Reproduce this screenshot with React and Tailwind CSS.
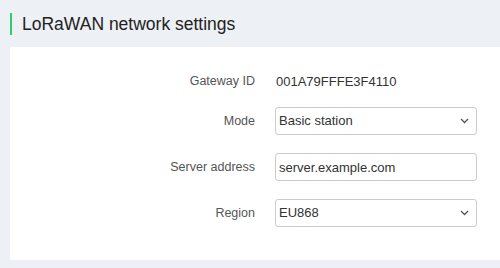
import { useState } from 'react';

const font = { fontFamily: '"Liberation Sans", Arial, sans-serif' };

function Chevron() {
  return (
    <svg width="9" height="6" viewBox="0 0 9 6" className="pointer-events-none absolute right-[8px] top-1/2 -translate-y-1/2">
      <path d="M1 1l3.5 3.5L8 1" fill="none" stroke="#555" strokeWidth="1.3" />
    </svg>
  );
}

// ── form row ──────────────────────────────────────────────────────────────
function Row({ label, children, className = '' }) {
  return (
    <div className={`flex items-center gap-[20px] ${className}`}>
      <div className="w-[245px] shrink-0 text-right text-[12.5px] text-[#555]">{label}</div>
      <div className="w-[202px] shrink-0">{children}</div>
    </div>
  );
}

function Select({ value, options, onChange }) {
  return (
    <div className="relative">
      <select value={value} onChange={e => onChange(e.target.value)}
        className="h-[28px] w-full appearance-none rounded-[3px] border border-[#ccc] bg-white pl-[3px] pr-6 text-[13px] text-[#333] outline-none"
        style={font}>
        {options.map(o => <option key={o}>{o}</option>)}
      </select>
      <Chevron />
    </div>
  );
}

export default function App() {
  const [mode, setMode] = useState('Basic station');
  const [server, setServer] = useState('server.example.com');
  const [region, setRegion] = useState('EU868');

  return (
    <div className="h-[268px] w-[500px] overflow-hidden bg-[#edf0f4]" style={font}>
      <div className="flex h-[47px] items-start pl-[10px] pt-[13px]">
        <div className="h-[22px] w-[2px] bg-[#2ecc71]" />
        <h1 className="ml-[10px] text-[17.5px] leading-[22px] text-[#222]">LoRaWAN network settings</h1>
      </div>

      <div className="ml-[10px] h-[213px] bg-white pt-[22px]">
        <Row label="Gateway ID" className="h-[24px]">
          <span className="pl-px text-[13px] text-[#333]">001A79FFFE3F4110</span>
        </Row>
        <Row label="Mode" className="mt-[14px]">
          <Select value={mode} onChange={setMode} options={['Basic station', 'Packet forwarder']} />
        </Row>
        <Row label="Server address" className="mt-[18px]">
          <input value={server} onChange={e => setServer(e.target.value)}
            className="h-[28px] w-full rounded-[3px] border border-[#ccc] bg-white px-[3px] text-[13px] text-[#333] outline-none"
            style={font} />
        </Row>
        <Row label="Region" className="mt-[18px]">
          <Select value={region} onChange={setRegion} options={['EU868', 'US915', 'AS923', 'AU915']} />
        </Row>
      </div>
    </div>
  );
}
